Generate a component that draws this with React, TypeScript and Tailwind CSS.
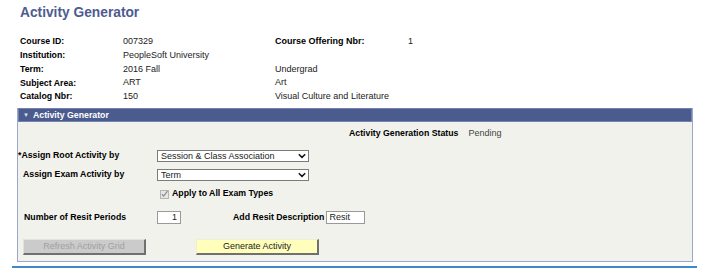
import React from "react";

const F = { fontFamily: '"Liberation Sans", Arial, sans-serif' };

function Chevron() {
  return (
    <svg width="8" height="6" viewBox="0 0 8 6" className="shrink-0">
      <path d="M0.8 1.2 L4 4.4 L7.2 1.2" fill="none" stroke="#111" strokeWidth="1.5" />
    </svg>
  );
}

function Select({ value }: { value: string }) {
  return (
    <div className="flex items-center justify-between w-[152px] h-[12px] bg-white border border-[#7b7b7b] pl-[3px] pr-[2px] text-[9px] leading-[9px] text-[#222]">
      <span>{value}</span>
      <Chevron />
    </div>
  );
}

const Row = ({ a, b, c, d, cBold }: { a: string; b: string; c?: string; d?: string; cBold?: boolean }) => (
  <div className="flex items-center h-[13.75px]">
    <div className="w-[103px] text-[8.75px] font-bold text-black">{a}</div>
    <div className="w-[152px] text-[9px] text-[#222]">{b}</div>
    <div className={"w-[133px] text-[9px] " + (cBold ? "font-bold text-[8.75px] text-black" : "text-[#222]")}>{c}</div>
    <div className="text-[9px] text-[#222]">{d}</div>
  </div>
);

export default function App() {
  return (
    <div className="w-[704px] h-[273px] bg-white overflow-hidden" style={F}>
      <div className="h-[35px] pl-[20px] pt-[4px]">
        <div className="h-[18px] leading-[18px] text-[13.75px] font-bold text-[#4d5c8f]">Activity Generator</div>
      </div>
      <div className="h-[73px] pl-[20px]">
        <Row a="Course ID:" b="007329" c="Course Offering Nbr:" d="1" cBold />
        <Row a="Institution:" b="PeopleSoft University" />
        <Row a="Term:" b="2016 Fall" c="Undergrad" />
        <Row a="Subject Area:" b="ART" c="Art" />
        <Row a="Catalog Nbr:" b="150" c="Visual Culture and Literature" />
      </div>
      <div className="ml-[17px] w-[676px] h-[154px] flex flex-col border-x border-b border-[#9ba7c8] bg-[#f2f2ed]">
        <div className="h-[14px] shrink-0 bg-[#4b5b8d] border border-[#7382b0] flex items-center pl-[4px] text-white">
          <span className="text-[6px] leading-[6px] mr-[4px] text-[#dde2ee]">▼</span>
          <span className="text-[8.75px] font-bold leading-[10px]">Activity Generator</span>
        </div>
        <div className="flex flex-col">
          <div className="mt-[6px] h-[12px] flex items-center pl-[331px] gap-[10px]">
            <span className="text-[8.75px] font-bold text-black">Activity Generation Status</span>
            <span className="text-[9px] text-[#444]">Pending</span>
          </div>
          <div className="mt-[10px] h-[12px] flex items-center">
            <div className="w-[139px] pl-[0px] text-[8.75px] font-bold text-black">*Assign Root Activity by</div>
            <Select value="Session & Class Association" />
          </div>
          <div className="mt-[7px] h-[12px] flex items-center">
            <div className="w-[139px] pl-[5px] text-[8.75px] font-bold text-black">Assign Exam Activity by</div>
            <Select value="Term" />
          </div>
          <div className="mt-[8px] h-[10px] flex items-center pl-[142px]">
            <span className="w-[9px] h-[9px] border border-[#b5b5b5] bg-[#e6e6e6] flex items-center justify-center mr-[3px]">
              <svg width="8" height="8" viewBox="0 0 8 8">
                <path d="M1 4.2 L3 6.4 L7.4 0.8" fill="none" stroke="#8a8a8a" strokeWidth="1.4" />
              </svg>
            </span>
            <span className="text-[8.75px] font-bold text-black">Apply to All Exam Types</span>
          </div>
          <div className="mt-[12px] h-[13px] flex items-center">
            <div className="w-[139px] pl-[6px] text-[8.75px] font-bold text-black">Number of Resit Periods</div>
            <div className="w-[24px] h-[13px] bg-white border border-[#9a9a9a] text-right pr-[3px] text-[9px] leading-[11px] text-[#222]">1</div>
            <div className="ml-[52px] text-[8.75px] font-bold text-black">Add Resit Description</div>
            <div className="ml-[2px] w-[39px] h-[13px] bg-white border border-[#9a9a9a] pl-[2px] text-[9px] leading-[11px] text-[#222]">Resit</div>
          </div>
          <div className="mt-[15px] h-[16px] flex items-center pl-[5px]">
            <div className="w-[123px] h-[16px] bg-[#cbcbcb] border-t border-l border-[#e2e2e2] border-r-2 border-b-2 border-r-[#707070] border-b-[#707070] flex items-center justify-center text-[9px] text-[#a0a0a0]">
              Refresh Activity Grid
            </div>
            <div className="ml-[50px] w-[123px] h-[16px] bg-[#ffffbb] border-t border-l border-[#f0f0d0] border-r-2 border-b-2 border-r-[#707070] border-b-[#707070] flex items-center justify-center text-[9px] text-[#222]">
              Generate Activity
            </div>
          </div>
        </div>
      </div>
      <div className="mt-[4px] ml-[12px] w-[685px] h-[2px] bg-[#3d8ac8]" />
    </div>
  );
}
